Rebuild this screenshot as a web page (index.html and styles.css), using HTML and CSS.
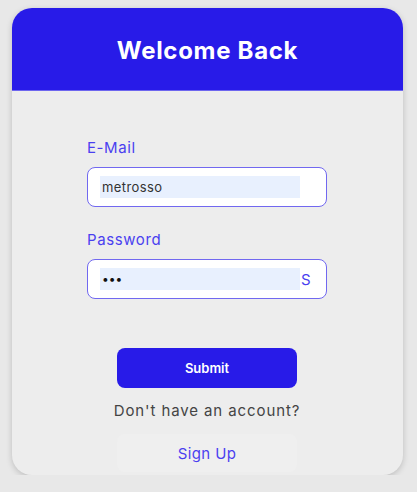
FILE: index.html
```html
<!DOCTYPE html>
<html>
<head>
<meta charset="utf-8">
<link rel="stylesheet" href="styles.css">
</head>
<body>
<div class="card">
  <div class="header"><h1 class="title">Welcome Back</h1></div>
  <div class="body">
    <form class="form">
      <label class="label">E-Mail</label>
      <div class="field"><span class="fill">metrosso</span></div>
      <label class="label label-gap">Password</label>
      <div class="field"><span class="fill dots">•••</span><span class="show">S</span></div>
      <div class="actions">
        <button type="button" class="submit">Submit</button>
        <p class="hint">Don't have an account?</p>
        <button type="button" class="signup">Sign Up</button>
      </div>
    </form>
  </div>
</div>
</body>
</html>
```
FILE: styles.css
```css
* { box-sizing: border-box; }
body {
  margin: 0;
  background: #e8e8e8;
  font-family: Inter, "Open Sans", sans-serif;
}
.card {
  margin: 8px 0 0 12px;
  width: 391px;
  height: 467px;
  border-radius: 20px;
  overflow: hidden;
  background: #ededed;
  box-shadow: 0 2px 6px rgba(0,0,0,0.18);
}
.header {
  height: 83px;
  background: #281be8;
  border-bottom: 1px solid #6e66ef;
  display: flex;
  align-items: center;
  justify-content: center;
  padding-top: 3px;
}
.title {
  margin: 0;
  color: #fff;
  font-size: 24px;
  font-weight: 700;
  letter-spacing: 0.7px;
}
.body { padding: 46px 0 0 75px; }
.form { display: flex; flex-direction: column; width: 240px; }
.label {
  color: #4a3ff0;
  font-size: 15px;
  line-height: 22px;
  margin-bottom: 8px;
  letter-spacing: 0.6px;
}
.label-gap { margin-top: 22px; }
.field {
  height: 40px;
  border: 1.5px solid #7168f0;
  border-radius: 8px;
  background: #fff;
  display: flex;
  align-items: center;
  padding-left: 12px;
}
.fill {
  width: 200px;
  height: 22px;
  background: #e8f0fe;
  font-size: 13px;
  line-height: 22px;
  color: #333;
  padding-left: 2px;
  letter-spacing: 0.4px;
}
.dots { color: #111; font-size: 12px; letter-spacing: 0; }
.show {
  margin-left: 1px;
  color: #4a3ff0;
  font-size: 15px;
}
.actions {
  display: flex;
  flex-direction: column;
  align-items: center;
  margin-top: 49px;
}
.submit {
  width: 180px;
  height: 40px;
  border: none;
  border-radius: 8px;
  background: #281be8;
  color: #fff;
  font-family: inherit;
  font-size: 13px;
  font-weight: 600;
}
.hint {
  margin: 12px 0 12px;
  color: #444;
  font-size: 15px;
  line-height: 22px;
  letter-spacing: 0.9px;
}
.signup {
  width: 180px;
  height: 38px;
  border: none;
  border-radius: 8px;
  background: #efefef;
  color: #4a3ff0;
  font-family: inherit;
  font-size: 15px;
  letter-spacing: 0.4px;
}
```
